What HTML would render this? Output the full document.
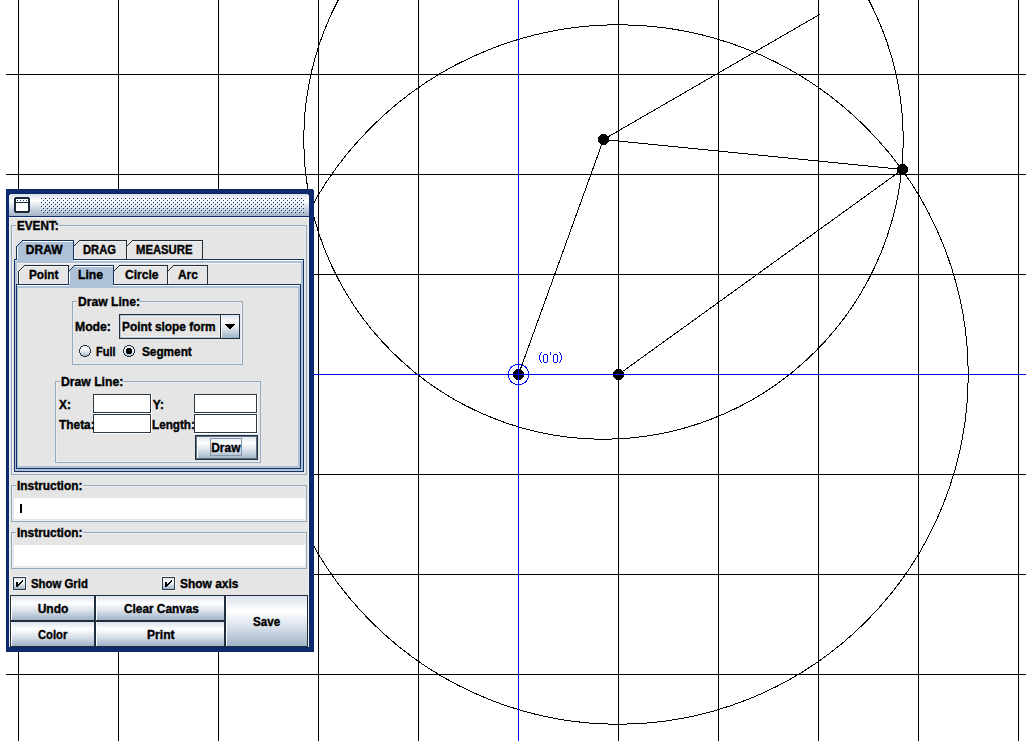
<!DOCTYPE html>
<html><head><meta charset="utf-8"><style>
html,body{margin:0;padding:0;background:#fff;width:1026px;height:741px;overflow:hidden;position:relative}
.t{position:absolute;white-space:pre;font-family:"Liberation Sans",sans-serif;font-weight:bold;font-size:12px;color:#000;line-height:1;transform-origin:0 0;-webkit-text-stroke:0.35px #000}
.lbl{position:absolute;white-space:pre;font-family:"Liberation Sans",sans-serif;color:#00f;line-height:1}
</style></head><body>
<svg width="1026" height="741" style="position:absolute;left:0;top:0" shape-rendering="crispEdges"><rect x="18" y="0" width="1" height="741" fill="#000"/><rect x="118" y="0" width="1" height="741" fill="#000"/><rect x="218" y="0" width="1" height="741" fill="#000"/><rect x="318" y="0" width="1" height="741" fill="#000"/><rect x="418" y="0" width="1" height="741" fill="#000"/><rect x="518" y="0" width="1" height="741" fill="#000"/><rect x="618" y="0" width="1" height="741" fill="#000"/><rect x="718" y="0" width="1" height="741" fill="#000"/><rect x="818" y="0" width="1" height="741" fill="#000"/><rect x="918" y="0" width="1" height="741" fill="#000"/><rect x="1018" y="0" width="1" height="741" fill="#000"/><rect x="6" y="74" width="1020" height="1" fill="#000"/><rect x="6" y="174" width="1020" height="1" fill="#000"/><rect x="6" y="274" width="1020" height="1" fill="#000"/><rect x="6" y="374" width="1020" height="1" fill="#000"/><rect x="6" y="474" width="1020" height="1" fill="#000"/><rect x="6" y="574" width="1020" height="1" fill="#000"/><rect x="6" y="674" width="1020" height="1" fill="#000"/><circle cx="603.5" cy="139.5" r="299.71" fill="none" stroke="#000" stroke-width="1"/><circle cx="618.5" cy="374.5" r="349.71" fill="none" stroke="#000" stroke-width="1"/><line x1="518.5" y1="374.5" x2="603.5" y2="139.5" stroke="#000" stroke-width="1"/><line x1="603.5" y1="139.5" x2="902.5" y2="169.5" stroke="#000" stroke-width="1"/><line x1="618.5" y1="374.5" x2="902.5" y2="169.5" stroke="#000" stroke-width="1"/><line x1="603.5" y1="139.5" x2="820.1" y2="14.15" stroke="#000" stroke-width="1"/><circle cx="518.5" cy="374.5" r="5.6" fill="#000"/><circle cx="603.5" cy="139.5" r="5.6" fill="#000"/><circle cx="902.5" cy="169.5" r="5.6" fill="#000"/><circle cx="618.5" cy="374.5" r="5.6" fill="#000"/><rect x="518" y="0" width="1" height="741" fill="#00f"/><rect x="6" y="374" width="1020" height="1" fill="#00f"/><circle cx="518.5" cy="374.5" r="10.2" fill="none" stroke="#00f" stroke-width="1"/><rect x="541" y="352" width="1" height="1" fill="#0000ff"/><rect x="540" y="353" width="1" height="2" fill="#0000ff"/><rect x="539" y="355" width="1" height="5" fill="#0000ff"/><rect x="540" y="360" width="1" height="2" fill="#0000ff"/><rect x="541" y="362" width="1" height="1" fill="#0000ff"/><rect x="543" y="355" width="1" height="7" fill="#0000ff"/><rect x="547" y="355" width="1" height="7" fill="#0000ff"/><rect x="544" y="354" width="3" height="1" fill="#0000ff"/><rect x="544" y="362" width="3" height="1" fill="#0000ff"/><rect x="553" y="355" width="1" height="7" fill="#0000ff"/><rect x="557" y="355" width="1" height="7" fill="#0000ff"/><rect x="554" y="354" width="3" height="1" fill="#0000ff"/><rect x="554" y="362" width="3" height="1" fill="#0000ff"/><rect x="550" y="352" width="1" height="3" fill="#0000ff"/><rect x="559" y="352" width="1" height="1" fill="#0000ff"/><rect x="560" y="353" width="1" height="2" fill="#0000ff"/><rect x="561" y="355" width="1" height="5" fill="#0000ff"/><rect x="560" y="360" width="1" height="2" fill="#0000ff"/><rect x="559" y="362" width="1" height="1" fill="#0000ff"/></svg>
<svg width="1026" height="741" style="position:absolute;left:0;top:0" shape-rendering="crispEdges"><defs><linearGradient id="tg" x1="0" y1="0" x2="0" y2="1"><stop offset="0" stop-color="#d4dde7"/><stop offset="0.3" stop-color="#ffffff"/><stop offset="0.6" stop-color="#d4dde7"/><stop offset="1" stop-color="#a3b4c6"/></linearGradient><linearGradient id="bg" x1="0" y1="0" x2="0" y2="1"><stop offset="0" stop-color="#dbe3ec"/><stop offset="0.3" stop-color="#ffffff"/><stop offset="0.6" stop-color="#dbe3ec"/><stop offset="1" stop-color="#9fb2c6"/></linearGradient><linearGradient id="rg" x1="0" y1="0" x2="0" y2="1"><stop offset="0" stop-color="#e4ebf2"/><stop offset="0.3" stop-color="#ffffff"/><stop offset="0.6" stop-color="#e4ebf2"/><stop offset="1" stop-color="#b3c3d4"/></linearGradient><pattern id="bump" x="40" y="197" width="4" height="4" patternUnits="userSpaceOnUse"><rect x="1" y="1" width="1" height="1" fill="#13306f"/><rect x="0" y="0" width="1" height="1" fill="#ffffff"/><rect x="3" y="3" width="1" height="1" fill="#13306f"/><rect x="2" y="2" width="1" height="1" fill="#ffffff"/></pattern></defs><rect x="6" y="189" width="308" height="463" fill="#0c2a6c"/><rect x="9" y="194" width="300" height="22" fill="url(#tg)"/><rect x="9" y="194" width="1" height="1" fill="#0c2a6c"/><rect x="308" y="194" width="1" height="1" fill="#0c2a6c"/><rect x="313" y="189" width="1" height="1" fill="#ffffff"/><rect x="40" y="197" width="264" height="16" fill="url(#bump)"/><rect x="15" y="197" width="14" height="2" fill="#1b2836"/><rect x="15" y="211" width="14" height="2" fill="#1b2836"/><rect x="14" y="198" width="2" height="14" fill="#1b2836"/><rect x="28" y="198" width="2" height="14" fill="#1b2836"/><rect x="16" y="199" width="12" height="3" fill="#ffffff"/><rect x="16" y="202" width="12" height="1" fill="#1b2836"/><rect x="16" y="203" width="12" height="8" fill="#ffffff"/><rect x="17" y="200" width="1" height="1" fill="#1d3f8a"/><rect x="20" y="200" width="1" height="1" fill="#1d3f8a"/><rect x="23" y="200" width="1" height="1" fill="#1d3f8a"/><rect x="26" y="200" width="1" height="1" fill="#1d3f8a"/><rect x="9" y="217" width="300" height="430" fill="#f4f2ee"/><rect x="10" y="218" width="298" height="428" fill="#e5e5e5"/></svg>
<svg width="1026" height="741" style="position:absolute;left:0;top:0" shape-rendering="crispEdges"><rect x="11" y="225" width="296" height="1" fill="#93aac3"/><rect x="11" y="474" width="296" height="1" fill="#93aac3"/><rect x="11" y="225" width="1" height="250" fill="#93aac3"/><rect x="306" y="225" width="1" height="250" fill="#93aac3"/><rect x="12" y="226" width="1" height="248" fill="#efede9"/><rect x="12" y="226" width="294" height="1" fill="#efede9"/><rect x="305" y="226" width="1" height="248" fill="#efede9"/><rect x="12" y="473" width="294" height="1" fill="#efede9"/><rect x="16" y="224" width="42" height="3" fill="#e5e5e5"/><rect x="12" y="473" width="294" height="1" fill="#efede9"/><rect x="15" y="260" width="288" height="211" fill="#adc2d9"/><rect x="14" y="259" width="290" height="1" fill="#16305f"/><rect x="14" y="471" width="290" height="1" fill="#16305f"/><rect x="14" y="259" width="1" height="213" fill="#16305f"/><rect x="303" y="259" width="1" height="213" fill="#16305f"/><rect x="15" y="260" width="288" height="1" fill="#ffffff"/><rect x="17" y="263" width="284" height="206" fill="#e5e5e5"/><rect x="17" y="263" width="284" height="1" fill="#f4f2ee"/><polygon points="73.5,259 73.5,246.5 79.5,240.5 126.5,240.5 126.5,259" fill="#e5e5e5" stroke="none"/><polyline points="73.5,258.5 73.5,246.5 79.5,240.5 126.5,240.5 126.5,258.5" fill="none" stroke="#1f2d3a" stroke-width="1"/><rect x="80" y="241" width="46" height="1" fill="#f4f2ee"/><rect x="74" y="247" width="1" height="12" fill="#f4f2ee"/><polygon points="126.5,259 126.5,246.5 132.5,240.5 202.5,240.5 202.5,259" fill="#e5e5e5" stroke="none"/><polyline points="126.5,258.5 126.5,246.5 132.5,240.5 202.5,240.5 202.5,258.5" fill="none" stroke="#1f2d3a" stroke-width="1"/><rect x="133" y="241" width="69" height="1" fill="#f4f2ee"/><rect x="127" y="247" width="1" height="12" fill="#f4f2ee"/><polygon points="16.5,259 16.5,246.5 22.5,240.5 73.5,240.5 73.5,259" fill="#adc2d9" stroke="none"/><polyline points="16.5,258.5 16.5,246.5 22.5,240.5 73.5,240.5 73.5,258.5" fill="none" stroke="#16305f" stroke-width="1"/><rect x="23" y="241" width="50" height="1" fill="#ffffff"/><rect x="17" y="247" width="1" height="12" fill="#ffffff"/><rect x="74" y="259" width="230" height="1" fill="#16305f"/><rect x="17" y="259" width="56" height="2" fill="#adc2d9"/><rect x="17" y="285" width="283" height="183" fill="#adc2d9"/><rect x="16" y="284" width="285" height="1" fill="#16305f"/><rect x="16" y="468" width="285" height="1" fill="#16305f"/><rect x="16" y="284" width="1" height="185" fill="#16305f"/><rect x="300" y="284" width="1" height="185" fill="#16305f"/><rect x="17" y="285" width="283" height="1" fill="#ffffff"/><rect x="18" y="288" width="280" height="178" fill="#e5e5e5"/><polygon points="18.5,284 18.5,271.5 24.5,265.5 68.5,265.5 68.5,284" fill="#e5e5e5" stroke="none"/><polyline points="18.5,283.5 18.5,271.5 24.5,265.5 68.5,265.5 68.5,283.5" fill="none" stroke="#1f2d3a" stroke-width="1"/><rect x="25" y="266" width="43" height="1" fill="#f4f2ee"/><rect x="19" y="272" width="1" height="12" fill="#f4f2ee"/><polygon points="113.5,284 113.5,271.5 119.5,265.5 167.5,265.5 167.5,284" fill="#e5e5e5" stroke="none"/><polyline points="113.5,283.5 113.5,271.5 119.5,265.5 167.5,265.5 167.5,283.5" fill="none" stroke="#1f2d3a" stroke-width="1"/><rect x="120" y="266" width="47" height="1" fill="#f4f2ee"/><rect x="114" y="272" width="1" height="12" fill="#f4f2ee"/><polygon points="167.5,284 167.5,271.5 173.5,265.5 207.5,265.5 207.5,284" fill="#e5e5e5" stroke="none"/><polyline points="167.5,283.5 167.5,271.5 173.5,265.5 207.5,265.5 207.5,283.5" fill="none" stroke="#1f2d3a" stroke-width="1"/><rect x="174" y="266" width="33" height="1" fill="#f4f2ee"/><rect x="168" y="272" width="1" height="12" fill="#f4f2ee"/><polygon points="68.5,284 68.5,271.5 74.5,265.5 113.5,265.5 113.5,284" fill="#adc2d9" stroke="none"/><polyline points="68.5,283.5 68.5,271.5 74.5,265.5 113.5,265.5 113.5,283.5" fill="none" stroke="#16305f" stroke-width="1"/><rect x="75" y="266" width="38" height="1" fill="#ffffff"/><rect x="69" y="272" width="1" height="12" fill="#ffffff"/><rect x="16" y="284" width="52" height="1" fill="#16305f"/><rect x="114" y="284" width="187" height="1" fill="#16305f"/><rect x="69" y="284" width="44" height="2" fill="#adc2d9"/><rect x="72" y="301" width="171" height="1" fill="#93aac3"/><rect x="72" y="364" width="171" height="1" fill="#93aac3"/><rect x="72" y="301" width="1" height="64" fill="#93aac3"/><rect x="242" y="301" width="1" height="64" fill="#93aac3"/><rect x="73" y="302" width="1" height="62" fill="#efede9"/><rect x="73" y="302" width="169" height="1" fill="#efede9"/><rect x="241" y="302" width="1" height="62" fill="#efede9"/><rect x="73" y="363" width="169" height="1" fill="#efede9"/><rect x="77" y="300" width="62" height="3" fill="#e5e5e5"/><rect x="119" y="314" width="121" height="25" fill="#b2c4d6"/><rect x="121" y="316" width="99" height="21" fill="#f0efec"/><rect x="122" y="317" width="97" height="19" fill="#e5e5e5"/><rect x="119" y="314" width="121" height="1" fill="#1f2e3c"/><rect x="119" y="338" width="121" height="1" fill="#1f2e3c"/><rect x="119" y="314" width="1" height="25" fill="#1f2e3c"/><rect x="239" y="314" width="1" height="25" fill="#1f2e3c"/><rect x="221" y="315" width="18" height="23" fill="url(#bg)"/><rect x="220" y="315" width="1" height="23" fill="#1f2e3c"/><rect x="221" y="315" width="1" height="23" fill="#ffffff"/><rect x="225" y="324" width="10" height="1" fill="#000"/><rect x="226" y="325" width="8" height="1" fill="#000"/><rect x="227" y="326" width="6" height="1" fill="#000"/><rect x="228" y="327" width="4" height="1" fill="#000"/><rect x="229" y="328" width="2" height="1" fill="#000"/><circle cx="85" cy="351" r="5.5" fill="url(#bg)" stroke="none" shape-rendering="auto"/><rect x="83" y="345" width="4" height="1" fill="#22313f"/><rect x="81" y="346" width="2" height="1" fill="#22313f"/><rect x="87" y="346" width="2" height="1" fill="#22313f"/><rect x="83" y="356" width="4" height="1" fill="#22313f"/><rect x="81" y="355" width="2" height="1" fill="#22313f"/><rect x="87" y="355" width="2" height="1" fill="#22313f"/><rect x="80" y="347" width="1" height="2" fill="#22313f"/><rect x="89" y="347" width="1" height="2" fill="#22313f"/><rect x="79" y="349" width="1" height="4" fill="#22313f"/><rect x="90" y="349" width="1" height="4" fill="#22313f"/><rect x="80" y="353" width="1" height="2" fill="#22313f"/><rect x="89" y="353" width="1" height="2" fill="#22313f"/><circle cx="129" cy="351" r="5.5" fill="url(#bg)" stroke="none" shape-rendering="auto"/><rect x="127" y="345" width="4" height="1" fill="#22313f"/><rect x="125" y="346" width="2" height="1" fill="#22313f"/><rect x="131" y="346" width="2" height="1" fill="#22313f"/><rect x="127" y="356" width="4" height="1" fill="#22313f"/><rect x="125" y="355" width="2" height="1" fill="#22313f"/><rect x="131" y="355" width="2" height="1" fill="#22313f"/><rect x="124" y="347" width="1" height="2" fill="#22313f"/><rect x="133" y="347" width="1" height="2" fill="#22313f"/><rect x="123" y="349" width="1" height="4" fill="#22313f"/><rect x="134" y="349" width="1" height="4" fill="#22313f"/><rect x="124" y="353" width="1" height="2" fill="#22313f"/><rect x="133" y="353" width="1" height="2" fill="#22313f"/><rect x="126" y="349" width="6" height="4" fill="#000"/><rect x="127" y="348" width="4" height="1" fill="#000"/><rect x="127" y="353" width="4" height="1" fill="#000"/><rect x="55" y="381" width="206" height="1" fill="#93aac3"/><rect x="55" y="462" width="206" height="1" fill="#93aac3"/><rect x="55" y="381" width="1" height="82" fill="#93aac3"/><rect x="260" y="381" width="1" height="82" fill="#93aac3"/><rect x="56" y="382" width="1" height="80" fill="#efede9"/><rect x="56" y="382" width="204" height="1" fill="#efede9"/><rect x="259" y="382" width="1" height="80" fill="#efede9"/><rect x="56" y="461" width="204" height="1" fill="#efede9"/><rect x="60" y="380" width="62" height="3" fill="#e5e5e5"/><rect x="93" y="394" width="59" height="20" fill="#ffffff"/><rect x="93" y="394" width="58" height="1" fill="#2a3846"/><rect x="93" y="412" width="58" height="1" fill="#2a3846"/><rect x="93" y="394" width="1" height="19" fill="#2a3846"/><rect x="150" y="394" width="1" height="19" fill="#2a3846"/><rect x="151" y="394" width="1" height="20" fill="#ffffff"/><rect x="93" y="413" width="59" height="1" fill="#ffffff"/><rect x="194" y="394" width="64" height="20" fill="#ffffff"/><rect x="194" y="394" width="63" height="1" fill="#2a3846"/><rect x="194" y="412" width="63" height="1" fill="#2a3846"/><rect x="194" y="394" width="1" height="19" fill="#2a3846"/><rect x="256" y="394" width="1" height="19" fill="#2a3846"/><rect x="257" y="394" width="1" height="20" fill="#ffffff"/><rect x="194" y="413" width="64" height="1" fill="#ffffff"/><rect x="93" y="414" width="59" height="20" fill="#ffffff"/><rect x="93" y="414" width="58" height="1" fill="#2a3846"/><rect x="93" y="432" width="58" height="1" fill="#2a3846"/><rect x="93" y="414" width="1" height="19" fill="#2a3846"/><rect x="150" y="414" width="1" height="19" fill="#2a3846"/><rect x="151" y="414" width="1" height="20" fill="#ffffff"/><rect x="93" y="433" width="59" height="1" fill="#ffffff"/><rect x="194" y="414" width="64" height="20" fill="#ffffff"/><rect x="194" y="414" width="63" height="1" fill="#2a3846"/><rect x="194" y="432" width="63" height="1" fill="#2a3846"/><rect x="194" y="414" width="1" height="19" fill="#2a3846"/><rect x="256" y="414" width="1" height="19" fill="#2a3846"/><rect x="257" y="414" width="1" height="20" fill="#ffffff"/><rect x="194" y="433" width="64" height="1" fill="#ffffff"/><rect x="196" y="436" width="61" height="23" fill="url(#bg)"/><rect x="195" y="435" width="63" height="1" fill="#1f2e3c"/><rect x="195" y="459" width="63" height="1" fill="#1f2e3c"/><rect x="195" y="435" width="1" height="25" fill="#1f2e3c"/><rect x="257" y="435" width="1" height="25" fill="#1f2e3c"/><rect x="196" y="436" width="61" height="1" fill="#5c6f85"/><rect x="196" y="458" width="61" height="1" fill="#5c6f85"/><rect x="196" y="436" width="1" height="23" fill="#5c6f85"/><rect x="256" y="436" width="1" height="23" fill="#5c6f85"/><rect x="197" y="437" width="1" height="21" fill="#ffffff"/><rect x="210" y="438" width="32" height="1" fill="#8596aa"/><rect x="210" y="455" width="32" height="1" fill="#8596aa"/><rect x="210" y="438" width="1" height="18" fill="#8596aa"/><rect x="241" y="438" width="1" height="18" fill="#8596aa"/><rect x="11" y="485" width="296" height="1" fill="#93aac3"/><rect x="11" y="521" width="296" height="1" fill="#93aac3"/><rect x="11" y="485" width="1" height="37" fill="#93aac3"/><rect x="306" y="485" width="1" height="37" fill="#93aac3"/><rect x="12" y="486" width="1" height="35" fill="#efede9"/><rect x="12" y="486" width="294" height="1" fill="#efede9"/><rect x="305" y="486" width="1" height="35" fill="#efede9"/><rect x="12" y="520" width="294" height="1" fill="#efede9"/><rect x="16" y="484" width="67" height="3" fill="#e5e5e5"/><rect x="14" y="498" width="291" height="21" fill="#ffffff"/><rect x="20" y="504" width="2" height="9" fill="#000"/><rect x="11" y="532" width="296" height="1" fill="#93aac3"/><rect x="11" y="568" width="296" height="1" fill="#93aac3"/><rect x="11" y="532" width="1" height="37" fill="#93aac3"/><rect x="306" y="532" width="1" height="37" fill="#93aac3"/><rect x="12" y="533" width="1" height="35" fill="#efede9"/><rect x="12" y="533" width="294" height="1" fill="#efede9"/><rect x="305" y="533" width="1" height="35" fill="#efede9"/><rect x="12" y="567" width="294" height="1" fill="#efede9"/><rect x="16" y="531" width="67" height="3" fill="#e5e5e5"/><rect x="14" y="545" width="291" height="21" fill="#ffffff"/><rect x="12" y="576" width="15" height="15" fill="#f4f2ee"/><rect x="14" y="578" width="11" height="11" fill="url(#bg)"/><rect x="13" y="577" width="13" height="1" fill="#2a3a4a"/><rect x="13" y="589" width="13" height="1" fill="#2a3a4a"/><rect x="13" y="577" width="1" height="13" fill="#2a3a4a"/><rect x="25" y="577" width="1" height="13" fill="#2a3a4a"/><rect x="16" y="582" width="2" height="5" fill="#000"/><rect x="22" y="580" width="1" height="2" fill="#000"/><rect x="21" y="581" width="1" height="2" fill="#000"/><rect x="20" y="582" width="1" height="2" fill="#000"/><rect x="19" y="583" width="1" height="2" fill="#000"/><rect x="18" y="584" width="1" height="2" fill="#000"/><rect x="161" y="576" width="15" height="15" fill="#f4f2ee"/><rect x="163" y="578" width="11" height="11" fill="url(#bg)"/><rect x="162" y="577" width="13" height="1" fill="#2a3a4a"/><rect x="162" y="589" width="13" height="1" fill="#2a3a4a"/><rect x="162" y="577" width="1" height="13" fill="#2a3a4a"/><rect x="174" y="577" width="1" height="13" fill="#2a3a4a"/><rect x="165" y="582" width="2" height="5" fill="#000"/><rect x="171" y="580" width="1" height="2" fill="#000"/><rect x="170" y="581" width="1" height="2" fill="#000"/><rect x="169" y="582" width="1" height="2" fill="#000"/><rect x="168" y="583" width="1" height="2" fill="#000"/><rect x="167" y="584" width="1" height="2" fill="#000"/><rect x="11" y="596" width="83" height="24" fill="url(#bg)"/><rect x="10" y="595" width="85" height="1" fill="#1f2e3c"/><rect x="10" y="620" width="85" height="1" fill="#1f2e3c"/><rect x="10" y="595" width="1" height="26" fill="#1f2e3c"/><rect x="94" y="595" width="1" height="26" fill="#1f2e3c"/><rect x="11" y="596" width="1" height="24" fill="#ffffff"/><rect x="96" y="596" width="128" height="24" fill="url(#bg)"/><rect x="95" y="595" width="130" height="1" fill="#1f2e3c"/><rect x="95" y="620" width="130" height="1" fill="#1f2e3c"/><rect x="95" y="595" width="1" height="26" fill="#1f2e3c"/><rect x="224" y="595" width="1" height="26" fill="#1f2e3c"/><rect x="96" y="596" width="1" height="24" fill="#ffffff"/><rect x="11" y="622" width="83" height="24" fill="url(#bg)"/><rect x="10" y="621" width="85" height="1" fill="#1f2e3c"/><rect x="10" y="646" width="85" height="1" fill="#1f2e3c"/><rect x="10" y="621" width="1" height="26" fill="#1f2e3c"/><rect x="94" y="621" width="1" height="26" fill="#1f2e3c"/><rect x="11" y="622" width="1" height="24" fill="#ffffff"/><rect x="96" y="622" width="128" height="24" fill="url(#bg)"/><rect x="95" y="621" width="130" height="1" fill="#1f2e3c"/><rect x="95" y="646" width="130" height="1" fill="#1f2e3c"/><rect x="95" y="621" width="1" height="26" fill="#1f2e3c"/><rect x="224" y="621" width="1" height="26" fill="#1f2e3c"/><rect x="96" y="622" width="1" height="24" fill="#ffffff"/><rect x="226" y="596" width="81" height="50" fill="url(#bg)"/><rect x="225" y="595" width="83" height="1" fill="#1f2e3c"/><rect x="225" y="646" width="83" height="1" fill="#1f2e3c"/><rect x="225" y="595" width="1" height="52" fill="#1f2e3c"/><rect x="307" y="595" width="1" height="52" fill="#1f2e3c"/><rect x="226" y="596" width="1" height="50" fill="#ffffff"/></svg>
<span class="t" style="left:17.02px;top:220px;transform:scaleX(0.9756)">EVENT:</span><span class="t" style="left:25.80px;top:244px">DRAW</span><span class="t" style="left:82.97px;top:244px;transform:scaleX(0.9324)">DRAG</span><span class="t" style="left:136.16px;top:244px;transform:scaleX(0.9407)">MEASURE</span><span class="t" style="left:29.42px;top:269px;transform:scaleX(0.9793)">Point</span><span class="t" style="left:78.08px;top:269px;transform:scaleX(1.0174)">Line</span><span class="t" style="left:124.90px;top:269px;transform:scaleX(1.0061)">Circle</span><span class="t" style="left:177.60px;top:269px;transform:scaleX(0.9950)">Arc</span><span class="t" style="left:78.09px;top:296px;transform:scaleX(1.0119)">Draw Line:</span><span class="t" style="left:74.98px;top:321px;transform:scaleX(1.0152)">Mode:</span><span class="t" style="left:122.41px;top:321px;transform:scaleX(0.9882)">Point slope form</span><span class="t" style="left:95.88px;top:346px;transform:scaleX(0.9200)">Full</span><span class="t" style="left:141.70px;top:346px;transform:scaleX(0.9824)">Segment</span><span class="t" style="left:60.78px;top:376px;transform:scaleX(1.0153)">Draw Line:</span><span class="t" style="left:58.90px;top:399px;transform:scaleX(0.9909)">X:</span><span class="t" style="left:152.80px;top:399px">Y:</span><span class="t" style="left:59.20px;top:419px;transform:scaleX(0.9914)">Theta:</span><span class="t" style="left:152.43px;top:419px;transform:scaleX(0.9738)">Length:</span><span class="t" style="left:211.20px;top:442px">Draw</span><span class="t" style="left:17.21px;top:480px;transform:scaleX(0.9906)">Instruction:</span><span class="t" style="left:17.21px;top:527px;transform:scaleX(0.9906)">Instruction:</span><span class="t" style="left:31.10px;top:578px;transform:scaleX(0.9483)">Show Grid</span><span class="t" style="left:180.00px;top:578px;transform:scaleX(0.9948)">Show axis</span><span class="t" style="left:37.70px;top:603px">Undo</span><span class="t" style="left:123.70px;top:603px;transform:scaleX(0.9855)">Clear Canvas</span><span class="t" style="left:38.00px;top:629px;transform:scaleX(0.9375)">Color</span><span class="t" style="left:147.49px;top:629px;transform:scaleX(1.0115)">Print</span><span class="t" style="left:252.80px;top:616px;transform:scaleX(0.9679)">Save</span>
</body></html>
